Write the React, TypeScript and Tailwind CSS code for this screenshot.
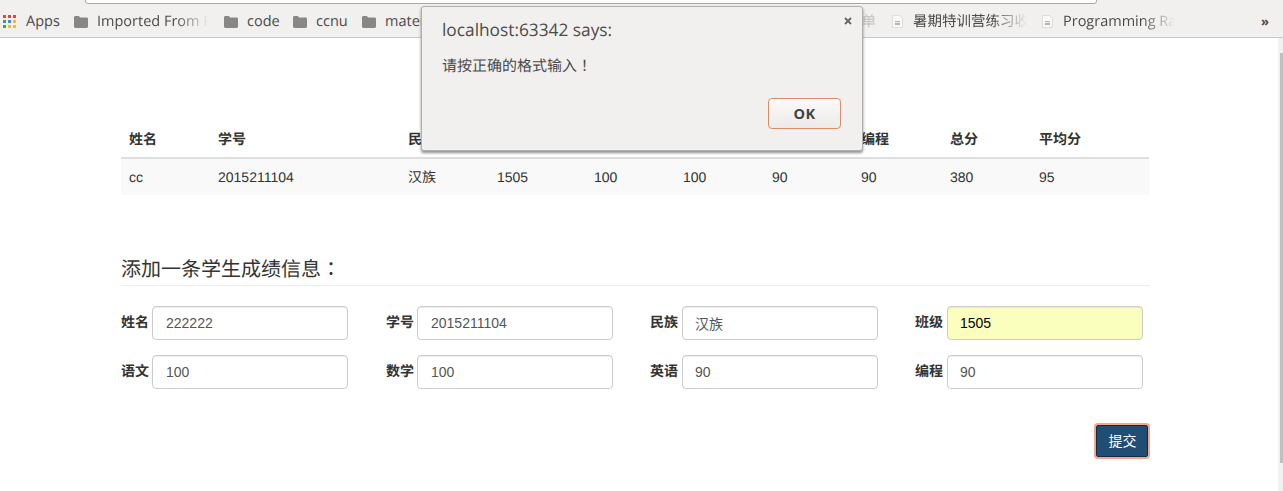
import React from 'react'

const cjk = 'font-["Liberation_Sans","Noto_Sans_CJK_SC",sans-serif]'

const columns = 'grid grid-cols-[89px_190px_89px_97px_89px_89px_89px_89px_89px_109px]'
const headers = ['姓名', '学号', '民族', '班级', '语文', '数学', '英语', '编程', '总分', '平均分']
const row = ['cc', '2015211104', '汉族', '1505', '100', '100', '90', '90', '380', '95']

const fields = [
  { label: '姓名', value: '222222' },
  { label: '学号', value: '2015211104' },
  { label: '民族', value: '汉族', shift: true },
  { label: '班级', value: '1505', filled: true, shift: true },
  { label: '语文', value: '100' },
  { label: '数学', value: '100' },
  { label: '英语', value: '90', shift: true },
  { label: '编程', value: '90', shift: true },
]

// fullwidth punctuation sits in the middle of its cell in this font
const Punct = ({ children }: { children: string }) => (
  <span className='font-["Noto_Sans_CJK_TC",sans-serif]'>{children}</span>
)

const Folder = () => (
  <svg width="14" height="12" viewBox="0 0 14 12" className="shrink-0">
    <path d="M0 1.5C0 .7.6 0 1.4 0h3.4l1.4 1.6h6.4c.8 0 1.4.6 1.4 1.4v7.6c0 .8-.6 1.4-1.4 1.4H1.4C.6 12 0 11.4 0 10.6z" fill="#888786" />
  </svg>
)

const Page = () => (
  <svg width="12" height="13" viewBox="0 0 12 13" className="shrink-0">
    <path d="M.5.5h7l3 3v9h-10z" fill="#fafafa" stroke="#dcdcdc" />
    <rect x="3" y="6" width="5" height="4" fill="#b4b4b4" />
    <path d="M3 7.5h5" stroke="#eee" />
  </svg>
)

const AppsIcon = () => (
  <div className="grid grid-cols-[repeat(3,3px)] grid-rows-[repeat(3,3px)] gap-[2px]">
    {['#ea4335', '#ea4335', '#ea4335', '#34a853', '#4285f4', '#fbbc05', '#34a853', '#fbbc05', '#fbbc05'].map((c, i) => (
      <span key={i} style={{ backgroundColor: c }} />
    ))}
  </div>
)

const Bookmark = ({ icon, text, width, ml, fade }: { icon: React.ReactNode; text: string; width: number; ml: string; fade?: boolean }) => (
  <div className={`flex items-center gap-[9px] shrink-0 ${ml}`}>
    {icon}
    <span
      className={`overflow-hidden whitespace-nowrap ${fade ? '[mask-image:linear-gradient(to_right,black_70%,transparent_100%)]' : ''}`}
      style={{ width }}
    >
      {text}
    </span>
  </div>
)

const Toolbar = () => (
  <div className="relative h-[38px] bg-[#f1f0ee] border-b border-[#c8c8c8] flex items-center pl-[3px] pr-[14px] pt-[6px] text-[14.5px] text-[#4b4b4b] font-['Open_Sans','Noto_Sans_CJK_SC',sans-serif] overflow-hidden">
    <div className="absolute left-[85px] top-[-8px] w-[1012px] h-[12px] bg-white border border-[#a8a8a8] rounded-[3px]" />
    <AppsIcon />
    <span className="ml-[10px] w-[35px]">Apps</span>
    <Bookmark icon={<Folder />} text="Imported From F" width={112} ml="ml-[13px]" fade />
    <Bookmark icon={<Folder />} text="code" width={36} ml="ml-[15px]" />
    <Bookmark icon={<Folder />} text="ccnu" width={36} ml="ml-[10px]" />
    <Bookmark icon={<Folder />} text="mater" width={60} ml="ml-[10px]" />
    <div className="flex-1" />
    <span className="text-[#c4c4c4] mr-[16px]">单</span>
    <Bookmark icon={<Page />} text="暑期特训营练习收" width={114} ml="" fade />
    <Bookmark icon={<Page />} text="Programming Ra" width={112} ml="ml-[15px]" fade />
    <span className="ml-[86px] text-[13px] font-bold">»</span>
  </div>
)

const Dialog = () => (
  <div className="absolute left-[421px] top-[6px] w-[442px] h-[145px] bg-[#f1f0ee] border border-[#b0b0b0] rounded-[3px] shadow-[0_2px_3px_rgba(0,0,0,0.45)] pl-[20px] pr-[21px] pt-[13px] font-['Open_Sans','Noto_Sans_CJK_SC',sans-serif] text-[#4b4b4b]">
    <button className="absolute right-[10px] top-[10px]">
      <svg width="8" height="8" viewBox="0 0 8 8" className="block">
        <path d="M1 1l6 6M7 1L1 7" stroke="#666" strokeWidth="1.8" />
      </svg>
    </button>
    <div className="text-[17.3px] leading-[22px]">localhost:63342 says:</div>
    <div className="mt-[14px] text-[15px] leading-[20px]">请按正确的格式输入<Punct>！</Punct></div>
    <div className="flex justify-end mt-[22px]">
      <button className="w-[73px] h-[31px] rounded-[4px] border border-[#e08a6a] bg-gradient-to-b from-[#fbfaf9] to-[#ecebe8] text-[14.5px] font-bold tracking-[0.5px] text-[#444]">OK</button>
    </div>
  </div>
)

const Table = () => (
  <div className="mt-[82px] w-[1028px] text-sm text-[#333]">
    <div className={`${columns} font-bold border-b-2 border-[#ddd] h-[39px] items-center`}>
      {headers.map((h) => <div key={h} className="px-2">{h}</div>)}
    </div>
    <div className={`${columns} bg-[#f9f9f9] h-[36px] items-center`}>
      {row.map((c, i) => <div key={i} className="px-2">{c}</div>)}
    </div>
  </div>
)

const Form = () => (
  <div className="mt-[58px]">
    <h4 className="text-[20px] leading-[29px] text-[#333] border-b border-[#eee] h-[33px]">添加一条学生成绩信息<Punct>：</Punct></h4>
    <div className="mt-[20px] grid grid-cols-[repeat(4,265px)] gap-y-[15px]">
      {fields.map((f) => (
        <div key={f.label} className="flex items-center gap-[3px]">
          <label className={`w-[28px] mb-[2px] text-sm font-bold text-[#333] ${f.shift ? '-ml-px mr-px' : ''}`}>{f.label}</label>
          <input
            readOnly
            value={f.value}
            className={`w-[196px] h-[34px] pr-3 text-sm rounded-[4px] border border-[#ccc] shadow-[inset_0_1px_1px_rgba(0,0,0,0.075)] outline-none ${f.shift ? 'pl-3' : 'pl-[13px]'} ${f.filled ? 'bg-[#faffbd] text-black' : 'bg-white text-[#555]'}`}
          />
        </div>
      ))}
    </div>
    <div className="flex justify-end mt-[34px]">
      <button className="w-[56px] h-[36px] pl-px rounded-[4px] bg-[#204d74] border-2 border-[#f0a68f] text-white text-sm [background-clip:padding-box] shadow-[inset_0_0_0_1px_#122b40]">提交</button>
    </div>
  </div>
)

const Scrollbar = () => (
  <div className="w-[5px] bg-[#f1f1f1] pl-[2px] pt-[15px] pb-[28px]">
    <div className="h-full bg-[#c0c0c0]" />
  </div>
)

export default function App() {
  return (
    <div className={`relative w-[1283px] h-[491px] bg-white overflow-hidden flex flex-col [text-rendering:geometricPrecision] ${cjk}`}>
      <Toolbar />
      <div className="flex flex-1 min-h-0 justify-between">
        <div className="w-[1029px] ml-[121px]">
          <Table />
          <Form />
        </div>
        <Scrollbar />
      </div>
      <Dialog />
    </div>
  )
}
